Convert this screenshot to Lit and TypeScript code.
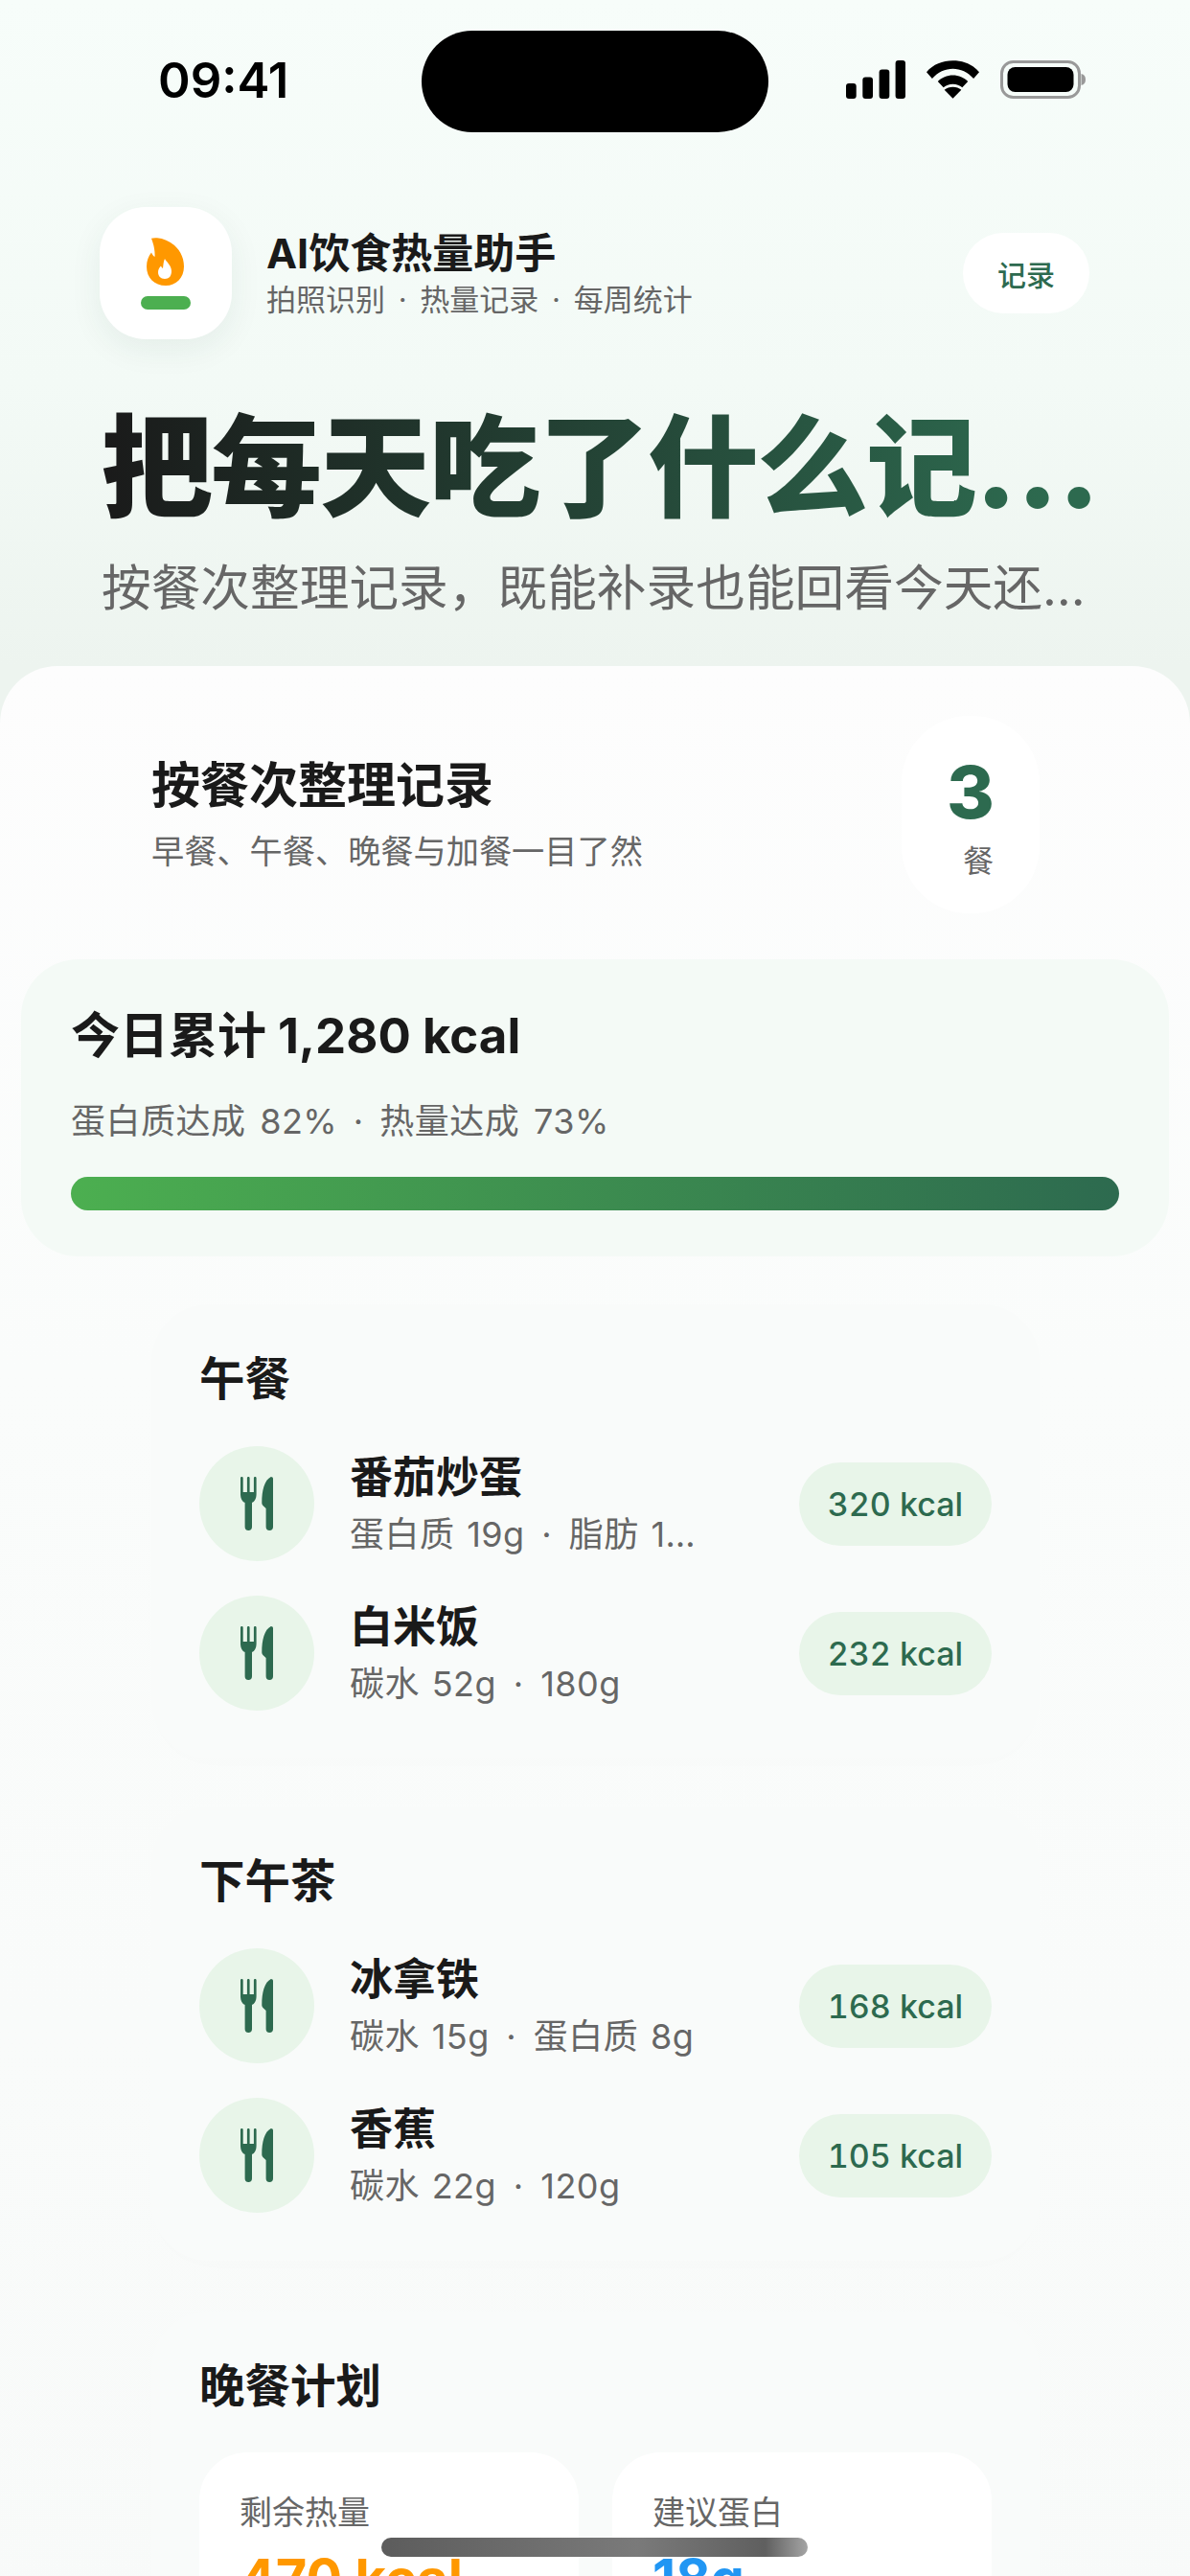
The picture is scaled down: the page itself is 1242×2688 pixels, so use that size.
import { LitElement, html, css, svg } from "lit";
import { customElement } from "lit/decorators.js";

const fork = svg`<svg class="fk" viewBox="0 0 34 56" width="34" height="56" fill="#2d6a4f">
  <path d="M0 1.3a1.35 1.35 0 0 1 2.7 0V16H6.9V1.3a1.35 1.35 0 0 1 2.7 0V16H13.9V1.3a1.35 1.35 0 0 1 2.7 0V18C16.6 23 14.5 26 12 27V52.3a3.7 3.7 0 0 1-7.4 0V27C2.1 26 0 23 0 18Z"/>
  <path d="M31.8 0C33.2 0 34 .8 34 2V52.3a3.7 3.7 0 0 1-7.4 0V33L23.4 30C22.6 29 22.3 28.3 22.3 27C22.3 14 25 3.5 31.8 0Z"/>
</svg>`;

const dotted = (s: string) => {
  const parts = s.split(" · ");
  return parts.map((p, i) => html`${p}${i < parts.length - 1 ? html` <span class="dot">·</span> ` : ""}`);
};

const meals = [
  { title: "午餐", items: [
    { n: "番茄炒蛋", s: "蛋白质 19g · 脂肪 14g · 油盐适中", k: "320 kcal" },
    { n: "白米饭", s: "碳水 52g · 180g", k: "232 kcal" },
  ]},
  { title: "下午茶", items: [
    { n: "冰拿铁", s: "碳水 15g · 蛋白质 8g", k: "168 kcal" },
    { n: "香蕉", s: "碳水 22g · 120g", k: "105 kcal" },
  ]},
];

@customElement("app-root")
export class AppRoot extends LitElement {
  static styles = css`
    :host { display: block; width: 1242px; height: 2688px; overflow: hidden; position: relative;
      font-family: Inter, "Noto Sans CJK SC", sans-serif;
      background: linear-gradient(180deg, #f7fdfa 0%, #f3faf6 400px, #edf4ef 695px); color: #1a1a1a; }
    .status { height: 216px; box-sizing: border-box; padding: 0 109px 0 165px; display: flex; justify-content: space-between; align-items: flex-start; }
    .time { font-size: 51px; font-weight: 600; line-height: 50px; margin-top: 59px; color: #000; }
    .island { position: absolute; left: 440px; top: 32px; width: 362px; height: 106px; border-radius: 53px; background: #000; }
    .sicons { display: flex; align-items: center; gap: 22px; margin-top: 63px; }
    .sicons svg { display: block; }
    .head { display: flex; align-items: center; padding: 0 105px 0 104px; height: 138px; }
    .logo { width: 138px; height: 138px; border-radius: 48px; background: #fff; box-shadow: 0 10px 34px rgba(30,70,50,.07);
      display: flex; flex-direction: column; align-items: center; justify-content: center; gap: 11px; flex: none; }
    .logo i { display: block; width: 52px; height: 14px; border-radius: 7px; background: #4caf50; }
    .htext { margin-left: 36px; flex: 1; }
    .htitle { font-size: 43px; font-weight: 700; line-height: 50px; }
    .hsub { font-size: 31px; line-height: 38px; color: #666; margin-top: 5px; word-spacing: 5px; }
    .rec { width: 132px; height: 84px; border-radius: 42px; background: #fff; color: #2d6a4f; font-size: 30px; font-weight: 500;
      display: flex; align-items: center; justify-content: center; }
    .hero { font-size: 116px; font-weight: 900; line-height: 140px; letter-spacing: -2px; margin: 64px 60px 0 106px; white-space: nowrap; overflow: hidden; text-overflow: ellipsis;
      background: linear-gradient(90deg, #1a1a1a, #2d6a4f 92%); -webkit-background-clip: text; background-clip: text; color: transparent; }
    .herosub { font-size: 51.7px; line-height: 70px; color: #666; margin: 20px 100px 0 106px; white-space: nowrap; overflow: hidden; text-overflow: ellipsis; }
    .sheet { position: absolute; left: 0; right: 0; top: 695px; height: 2100px; border-radius: 60px 60px 0 0; background: linear-gradient(180deg, #fdfdfd 0%, #fafcfb 35%, #f8faf9 100%); display: flex; flex-direction: column; }
    .sec { margin: 52px 157px 0 158px; display: flex; justify-content: space-between; height: 206px; }
    .sec h2 { margin: 42px 0 0; font-size: 51px; font-weight: 700; line-height: 62px; }
    .sec p { margin: 16px 0 0; font-size: 34.2px; line-height: 44px; color: #666; }
    .badge { width: 144px; height: 206px; border-radius: 70px; background: #fff; display: flex; flex-direction: column; align-items: center; }
    .badge b { font-size: 76px; font-weight: 800; line-height: 90px; margin-top: 34px; color: #2d6a4f; }
    .badge span { font-size: 32px; line-height: 40px; color: #666; margin-top: 8px; padding-left: 16px; }
    .sum { margin: 48px 22px 0; height: 313px; box-sizing: border-box; border-radius: 60px; background: #f4faf6; padding: 48px 52px; }
    .sum h3 { margin: 0; font-size: 51px; font-weight: 700; line-height: 64px; }
    .sum p { margin: 32px 0 0; font-size: 36px; line-height: 50px; color: #666; word-spacing: 4px; letter-spacing: .5px; }
    .sum .dot { margin: 0 2px; }
    .bar { height: 35px; border-radius: 18px; margin-top: 33px; background: linear-gradient(90deg, #4caf50, #2d6a4f); }
    .card { margin: 50px 157px 0 158px; padding: 50px; border-radius: 60px; background: #f9fbfa; box-shadow: 0 8px 40px rgba(30,70,50,.008); }
    .card.last { margin-top: 53px; }
    .card h4 { margin: 0; font-size: 47.5px; font-weight: 700; line-height: 56px; }
    .row { display: flex; align-items: center; margin-top: 36px; height: 120px; }
    .card h4 + .row { margin-top: 42px; }
    .ci { width: 120px; height: 120px; border-radius: 50%; background: #e8f5e9; display: flex; align-items: center; justify-content: center; flex: none; }
    .tx { margin-left: 37px; flex: 1; min-width: 0; }
    .nm { font-size: 45px; font-weight: 700; line-height: 56px; }
    .sb { font-size: 36px; line-height: 46px; color: #666; white-space: nowrap; overflow: hidden; text-overflow: ellipsis; width: 362px; margin-top: 8px; word-spacing: 2px; letter-spacing: .5px; }
    .sb .dot { margin: 0 5px; }
    .pill { height: 87px; border-radius: 44px; padding: 0 30px; background: #e8f5e9; color: #2d6a4f; font-size: 34px; font-weight: 500; font-variant-numeric: tabular-nums; display: flex; align-items: center; flex: none; }
    .stats { display: grid; grid-template-columns: 1fr 1fr; gap: 35px; margin-top: 41px; }
    .st { border-radius: 50px; background: #fff; padding: 42px; height: 300px; box-sizing: border-box; }
    .st span { display: block; font-size: 34px; line-height: 42px; color: #666; }
    .st b { display: block; font-size: 56px; font-weight: 700; line-height: 66px; margin-top: 15px; }
    .orange { color: #ff9800; }
    .blue { color: #2196f3; }
    .home { position: absolute; left: 398px; top: 2648px; width: 445px; height: 20px; border-radius: 10px;
      background: linear-gradient(90deg, #5c5c5c, #7a7a7a 60%, #5f5f5f 90%, #a5a5a5); }
  `;

  render() {
    return html`
      <div class="island"></div>
      <div class="status">
        <div class="time">09:41</div>
        <div class="sicons">
          <svg width="62" height="40" viewBox="0 0 62 40" fill="#000">
            <rect x="0" y="24" width="10.700" height="16" rx="3"/><rect x="17.300" y="17.500" width="10.700" height="22.500" rx="3"/><rect x="34.600" y="9.500" width="10.700" height="30.500" rx="3"/><rect x="51.600" y="0" width="10.400" height="40" rx="3"/>
          </svg>
          <svg width="55" height="40" viewBox="0 0 56 40" fill="#000">
            <path d="M0 12C7 4 17 0 28 0s21 4 28 12l-6 7C44 12 36 8.500 28 8.500S12 12 6 19Z"/>
            <path d="M12 22c4-4 10-6.500 16-6.500S40 18 44 22l-6 6.500c-3-2.500-6-3.700-10-3.700s-7 1.200-10 3.700Z"/>
            <path d="M19 31c2.500-2 5.500-3 9-3s6.500 1 9 3l-9 9Z"/>
          </svg>
          <svg width="89" height="40" viewBox="0 0 89 40">
            <rect x="1.500" y="1.500" width="81" height="37" rx="12" fill="none" stroke="#999" stroke-width="3"/>
            <rect x="7.500" y="7" width="69" height="26" rx="8" fill="#000"/>
            <path d="M84.500 14c3 .5 4.500 3 4.500 6s-1.500 5.500-4.500 6Z" fill="#999"/>
          </svg>
        </div>
      </div>
      <div class="head">
        <div class="logo">
          <svg width="40" height="50" viewBox="0 0 40 50">
            <path fill="#ff9800" d="M5 .7C6.500.3 9 0 11 .3 25 1.500 39 13 39 30 39 42 31 50 20 50 8 50 0 42 0 30 0 24 2 19.500 5 15.500 6 18 7 19 8.500 20 9 13 7 6 5 .7Z"/>
            <path fill="#fff" d="M19 22C20.500 25 26 29 26 35 26 40 23.500 43 19 43 14.500 43 12 40 12 36 12 33 13.500 31 15 29.500 15.500 30.800 16 31.500 17 32 17.500 28 17.500 25 19 22Z"/>
          </svg>
          <i></i>
        </div>
        <div class="htext">
          <div class="htitle">AI饮食热量助手</div>
          <div class="hsub">拍照识别 · 热量记录 · 每周统计</div>
        </div>
        <div class="rec">记录</div>
      </div>
      <div class="hero">把每天吃了什么记下来，一目了然</div>
      <div class="herosub">按餐次整理记录，既能补录也能回看今天还差多少热量</div>
      <div class="sheet">
        <div class="sec">
          <div>
            <h2>按餐次整理记录</h2>
            <p>早餐、午餐、晚餐与加餐一目了然</p>
          </div>
          <div class="badge"><b>3</b><span>餐</span></div>
        </div>
        <div class="sum">
          <h3>今日累计 1,280 kcal</h3>
          <p>${dotted("蛋白质达成 82% · 热量达成 73%")}</p>
          <div class="bar"></div>
        </div>
        ${meals.map((m) => html`
          <div class="card">
            <h4>${m.title}</h4>
            ${m.items.map((it) => html`
              <div class="row">
                <div class="ci">${fork}</div>
                <div class="tx"><div class="nm">${it.n}</div><div class="sb">${dotted(it.s)}</div></div>
                <div class="pill">${it.k}</div>
              </div>`)}
          </div>`)}
        <div class="card last">
          <h4>晚餐计划</h4>
          <div class="stats">
            <div class="st"><span>剩余热量</span><b class="orange">470 kcal</b></div>
            <div class="st"><span>建议蛋白</span><b class="blue">18g</b></div>
          </div>
        </div>
      </div>
      <div class="home"></div>
    `;
  }
}
